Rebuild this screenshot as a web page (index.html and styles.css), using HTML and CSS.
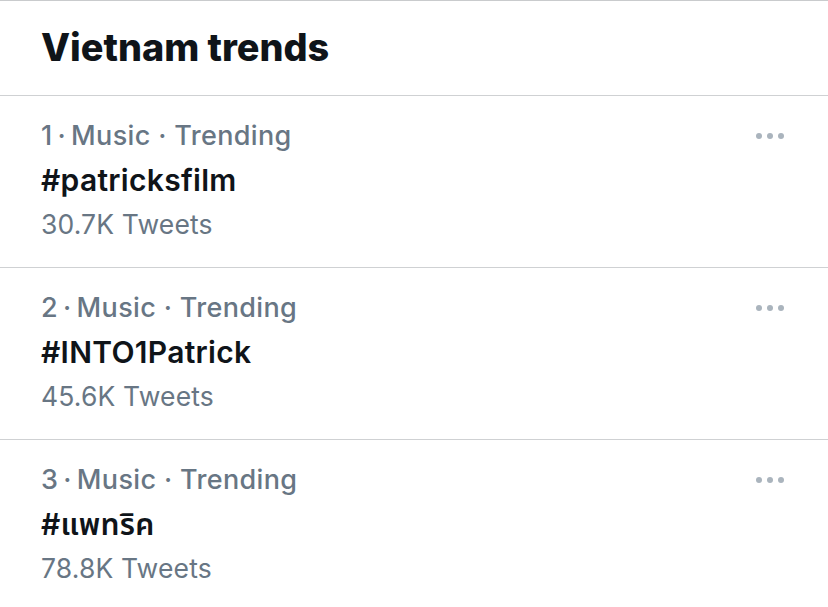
FILE: index.html
```html
<!DOCTYPE html>
<html>
<head>
<meta charset="utf-8">
<link rel="stylesheet" href="styles.css">
</head>
<body>
<div class="panel">
  <div class="header">Vietnam trends</div>
  <div class="trend">
    <div class="text">
      <div class="meta">1<span class="dot">·</span>Music · Trending</div>
      <div class="title">#patricksfilm</div>
      <div class="count">30.7K Tweets</div>
    </div>
    <div class="more"><span></span><span></span><span></span></div>
  </div>
  <div class="trend">
    <div class="text">
      <div class="meta">2<span class="dot">·</span>Music · Trending</div>
      <div class="title">#INTO1Patrick</div>
      <div class="count">45.6K Tweets</div>
    </div>
    <div class="more"><span></span><span></span><span></span></div>
  </div>
  <div class="trend">
    <div class="text">
      <div class="meta">3<span class="dot">·</span>Music · Trending</div>
      <div class="title">#แพทริค</div>
      <div class="count">78.8K Tweets</div>
    </div>
    <div class="more"><span></span><span></span><span></span></div>
  </div>
</div>
</body>
</html>
```
FILE: styles.css
```css
html, body {
  margin: 0;
  padding: 0;
  background: #ffffff;
}
body {
  font-family: Inter, "Noto Sans", "Noto Sans Thai", "DejaVu Sans", sans-serif;
  width: 828px;
  height: 607px;
  overflow: hidden;
}
.panel {
  border-top: 1px solid #c9cbcd;
}
.header {
  padding: 21px 41px 23px;
  font-size: 37.8px;
  line-height: 50px;
  font-weight: 800;
  color: #0f1419;
  border-bottom: 1px solid #cfd1d3;
}
.trend {
  display: flex;
  justify-content: space-between;
  padding: 18px 41px 21px;
  border-bottom: 1px solid #cfd1d3;
}
.meta, .count {
  font-size: 26.5px;
  line-height: 44px;
  color: #687684;
}
.meta {
  font-size: 27px;
  font-weight: 500;
  letter-spacing: 0.35px;
}
.count {
  letter-spacing: 0.15px;
}
.dot {
  margin: 0 5px;
}
.title {
  font-size: 30px;
  line-height: 44px;
  font-weight: 600;
  letter-spacing: 0.3px;
  color: #0f1419;
}
.more {
  display: flex;
  gap: 5px;
  padding-top: 19px;
  margin-right: 3px;
}
.more span {
  width: 6px;
  height: 6px;
  border-radius: 50%;
  background: #aab4bd;
}
```
